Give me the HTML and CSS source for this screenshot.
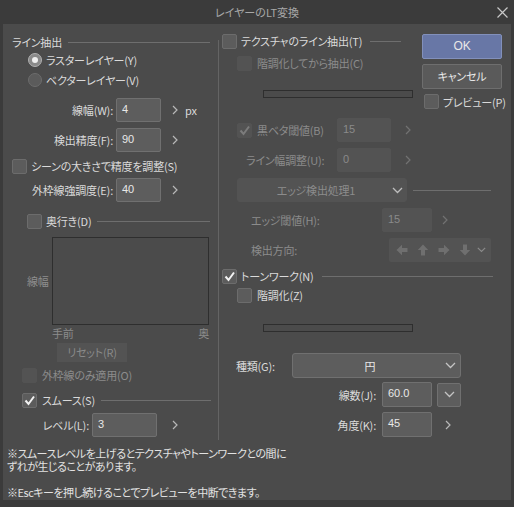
FILE: index.html
```html
<!DOCTYPE html>
<html lang="ja">
<head>
<meta charset="utf-8">
<title>レイヤーのLT変換</title>
<link rel="stylesheet" href="styles.css">
</head>
<body>
<div class="window">
  <div class="titlebar">
    <span class="title">レイヤーのLT変換</span>
    <svg class="close" width="11" height="11" viewBox="0 0 11 11"><path d="M0.5 0.5l10 10M10.5 0.5l-10 10" stroke="#c8c8c8" stroke-width="1.2" fill="none"/></svg>
  </div>
  <div class="panel">
    <div class="cols">
      <div class="left">
        <div class="row h16 mt10 pl5 pr4"><span>ライン抽出</span><span class="hline ml6"></span></div>
        <div class="row h16 mt2 pl21"><span class="radio on"></span><span class="ml4">ラスターレイヤー(Y)</span></div>
        <div class="row h16 mt4 pl21"><span class="radio"></span><span class="ml4">ベクターレイヤー(V)</span></div>
        <div class="row h24 mt10"><span class="lbl-r w106">線幅(W):</span><span class="field w45">4</span><span class="spin ml11"><svg width="6" height="10" viewBox="0 0 6 10"><path d="M1 1l4 4-4 4" fill="none" stroke="#b8b8b8" stroke-width="1.2"/></svg></span><span class="unit">px</span></div>
        <div class="row h24 mt6"><span class="lbl-r w106">検出精度(F):</span><span class="field w45">90</span><span class="spin ml11"><svg width="6" height="10" viewBox="0 0 6 10"><path d="M1 1l4 4-4 4" fill="none" stroke="#b8b8b8" stroke-width="1.2"/></svg></span></div>
        <div class="row h16 mt6 pl5"><span class="cb"></span><span class="ml4">シーンの大きさで精度を調整(S)</span></div>
        <div class="row h24 mt4"><span class="lbl-r w106">外枠線強調度(E):</span><span class="field w45">40</span><span class="spin ml11"><svg width="6" height="10" viewBox="0 0 6 10"><path d="M1 1l4 4-4 4" fill="none" stroke="#b8b8b8" stroke-width="1.2"/></svg></span></div>
        <div class="row h16 mt11 pl20 pr4"><span class="cb"></span><span class="ml4">奥行き(D)</span><span class="hline ml6"></span></div>
        <div class="row graph-row mt8 pl20"><span class="glabel">線幅</span><div class="graph"></div></div>
        <div class="graph-axis mt1"><span>手前</span><span>奥</span></div>
        <div class="row mt3 pl50"><span class="btn-dis">リセット(R)</span></div>
        <div class="row h16 mt5 pl15"><span class="cb dis"></span><span class="ml5 dim">外枠線のみ適用(O)</span></div>
        <div class="row h16 mt9 pl15 pr3"><span class="cb"><svg width="13" height="13" viewBox="0 0 13 13"><path d="M2.5 6.5l3 3.5 5.5-7.5" fill="none" stroke="#f2f2f2" stroke-width="2"/></svg></span><span class="ml5">スムース(S)</span><span class="hline ml6"></span></div>
        <div class="row h24 mt5"><span class="lbl-r w82">レベル(L):</span><span class="field w65">3</span><span class="spin ml15"><svg width="6" height="10" viewBox="0 0 6 10"><path d="M1 1l4 4-4 4" fill="none" stroke="#b8b8b8" stroke-width="1.2"/></svg></span></div>
      </div>
      <div class="vdiv"></div>
      <div class="right">
        <div class="topblock">
          <div class="tex">
            <div class="row h16 mt9"><span class="cb"></span><span class="ml4">テクスチャのライン抽出(T)</span><span class="hline ml8 mr12"></span></div>
            <div class="row h16 mt6 pl15"><span class="cb dis"></span><span class="ml5 dim">階調化してから抽出(C)</span></div>
            <div class="bar mt19"></div>
            <div class="row h24 mt20 pl15"><span class="cblabel"><span class="cb dis"><svg width="13" height="13" viewBox="0 0 13 13"><path d="M2.5 6.5l3 3.5 5.5-7.5" fill="none" stroke="#7c7c7c" stroke-width="2"/></svg></span><span class="ml5 dim">黒ベタ閾値(B)</span></span><span class="field dis w54">15</span><span class="spin ml14"><svg width="6" height="10" viewBox="0 0 6 10"><path d="M1 1l4 4-4 4" fill="none" stroke="#727272" stroke-width="1.2"/></svg></span></div>
            <div class="row h24 mt6"><span class="lbl dim ml24 w91">ライン幅調整(U):</span><span class="field dis w54">0</span><span class="spin ml14"><svg width="6" height="10" viewBox="0 0 6 10"><path d="M1 1l4 4-4 4" fill="none" stroke="#727272" stroke-width="1.2"/></svg></span></div>
          </div>
          <div class="btns">
            <div class="btn ok">OK</div>
            <div class="btn mt5">キャンセル</div>
            <div class="row h15 mt5 pl2"><span class="cb"></span><span class="ml4">プレビュー(P)</span></div>
          </div>
        </div>
        <div class="row h24 mt6"><span class="dd dis ml15 w170"><span class="dd-text">エッジ検出処理1</span><svg width="11" height="7" viewBox="0 0 11 7"><path d="M1 1l4.5 4.5L10 1" fill="none" stroke="#bdbdbd" stroke-width="1.3"/></svg></span><span class="hline ml6 mr20"></span></div>
        <div class="row h24 mt6"><span class="lbl dim ml29 w131">エッジ閾値(H):</span><span class="field dis w50">15</span><span class="spin ml10"><svg width="6" height="10" viewBox="0 0 6 10"><path d="M1 1l4 4-4 4" fill="none" stroke="#727272" stroke-width="1.2"/></svg></span></div>
        <div class="row h24 mt6"><span class="lbl dim ml29 w138">検出方向:</span>
          <span class="dirs">
            <svg width="12" height="12" viewBox="0 0 12 12"><path d="M0.5 6L6 0.8V4h5.5v4H6v3.2z" fill="#6f6f6f"/></svg>
            <svg width="12" height="12" viewBox="0 0 12 12"><path d="M6 0.5L11.2 6H8v5.5H4V6H0.8z" fill="#6f6f6f"/></svg>
            <svg width="12" height="12" viewBox="0 0 12 12"><path d="M11.5 6L6 0.8V4H0.5v4H6v3.2z" fill="#6f6f6f"/></svg>
            <svg width="12" height="12" viewBox="0 0 12 12"><path d="M6 11.5L11.2 6H8V0.5H4V6H0.8z" fill="#6f6f6f"/></svg>
            <svg class="dirchev" width="9" height="6" viewBox="0 0 9 6"><path d="M0.8 0.8l3.7 3.7 3.7-3.7" fill="none" stroke="#8a8a8a" stroke-width="1.2"/></svg>
          </span>
        </div>
        <div class="row h16 mt6"><span class="cb"><svg width="13" height="13" viewBox="0 0 13 13"><path d="M2.5 6.5l3 3.5 5.5-7.5" fill="none" stroke="#f2f2f2" stroke-width="2"/></svg></span><span class="ml4">トーンワーク(N)</span><span class="hline ml8 mr18"></span></div>
        <div class="row h16 mt3 pl15"><span class="cb"></span><span class="ml5">階調化(Z)</span></div>
        <div class="bar mt21"></div>
        <div class="row h25 mt21"><span class="lbl ml14 w56">種類(G):</span><span class="dd w169"><span class="dd-text">円</span><svg width="11" height="7" viewBox="0 0 11 7"><path d="M1 1l4.5 4.5L10 1" fill="none" stroke="#c4c4c4" stroke-width="1.3"/></svg></span></div>
        <div class="row h25 mt4"><span class="lbl-r w160">線数(J):</span><span class="field w50">60.0</span><span class="ddbtn"><svg width="11" height="7" viewBox="0 0 11 7"><path d="M1 1l4.5 4.5L10 1" fill="none" stroke="#c4c4c4" stroke-width="1.3"/></svg></span></div>
        <div class="row h25 mt5"><span class="lbl-r w160">角度(K):</span><span class="field w50">45</span><span class="spin ml13"><svg width="6" height="10" viewBox="0 0 6 10"><path d="M1 1l4 4-4 4" fill="none" stroke="#b8b8b8" stroke-width="1.2"/></svg></span></div>
      </div>
    </div>
    <div class="notes">
      <p class="nl">※スムースレベルを上げるとテクスチャやトーンワークとの間に</p>
      <p class="nl">ずれが生じることがあります。</p>
      <p class="nl note2">※Escキーを押し続けることでプレビューを中断できます。</p>
    </div>
  </div>
</div>
</body>
</html>
```

FILE: styles.css
```css
* { box-sizing: border-box; }
html, body { margin: 0; padding: 0; }
body {
  width: 514px;
  height: 507px;
  overflow: hidden;
  background: #3b3b3b;
  font-family: "Noto Sans CJK JP", "Noto Sans", sans-serif;
  font-size: 11px;
  letter-spacing: -0.2px;
  color: #dadada;
  font-feature-settings: "palt";
}
.window { width: 514px; height: 507px; }
.titlebar {
  height: 24px;
  display: grid;
  grid-template-columns: 1fr auto 1fr;
  align-items: center;
}
.title { grid-column: 2; color: #a8a8a8; letter-spacing: 0; }
.close { grid-column: 3; justify-self: end; margin-right: 6px; }
.panel {
  margin: 0 3px;
  height: 476px;
  background: #4b4b4b;
}
.cols { display: flex; height: 416px; }
.left { width: 207px; margin-left: 4px; display: flex; flex-direction: column; }
.vdiv { width: 1px; height: 400px; margin-left: 4px; margin-top: 16px; background: #646464; }
.right { flex: 1; margin-left: 3px; display: flex; flex-direction: column; }
.topblock { display: flex; }
.tex { width: 191px; display: flex; flex-direction: column; }
.btns { width: 80px; margin-left: 9px; margin-top: 10px; display: flex; flex-direction: column; }

.row { display: flex; align-items: center; white-space: nowrap; }
.h15 { height: 15px; }
.h16 { height: 16px; }
.h24 { height: 24px; }
.h25 { height: 25px; }

.mt1 { margin-top: 1px; } .mt2 { margin-top: 2px; } .mt3 { margin-top: 3px; }
.mt4 { margin-top: 4px; } .mt5 { margin-top: 5px; } .mt6 { margin-top: 6px; }
.mt8 { margin-top: 8px; } .mt9 { margin-top: 9px; } .mt10 { margin-top: 10px; }
.mt11 { margin-top: 11px; } .mt19 { margin-top: 19px; } .mt20 { margin-top: 20px; }
.mt21 { margin-top: 21px; }
.pl2 { padding-left: 2px; } .pl5 { padding-left: 5px; } .pl15 { padding-left: 15px; }
.pl20 { padding-left: 20px; } .pl21 { padding-left: 21px; } .pl50 { padding-left: 50px; }
.pr3 { padding-right: 3px; } .pr4 { padding-right: 4px; }
.ml4 { margin-left: 4px; } .ml5 { margin-left: 5px; } .ml6 { margin-left: 6px; }
.ml8 { margin-left: 8px; } .ml10 { margin-left: 10px; } .ml11 { margin-left: 11px; }
.ml13 { margin-left: 13px; } .ml14 { margin-left: 14px; } .ml15 { margin-left: 15px; }
.ml24 { margin-left: 24px; } .ml29 { margin-left: 29px; }
.mr12 { margin-right: 12px; } .mr18 { margin-right: 18px; } .mr20 { margin-right: 20px; }

.dim { color: #8c8c8c; }
.hline { flex: 1; height: 1px; background: #6e6e6e; }

.lbl { flex: none; }
.lbl-r { flex: none; text-align: right; margin-right: 3px; }
.lbl-r.w160 { margin-right: 6px; }
.w45 { width: 45px; } .w50 { width: 50px; } .w54 { width: 54px; } .w56 { width: 56px; }
.w65 { width: 65px; } .w82 { width: 82px; } .w91 { width: 91px; } .w106 { width: 106px; }
.w131 { width: 131px; } .w138 { width: 138px; } .w160 { width: 154px; } .w169 { width: 169px; }
.w170 { width: 170px; }

.field {
  flex: none;
  height: 24px;
  padding: 2px 0 0 5px;
  background: #5d5d5d;
  border: 1px solid #707070;
  border-radius: 2px;
  color: #e8e8e8;
  font-family: "Liberation Sans", sans-serif;
  font-size: 11px;
  letter-spacing: 0;
  line-height: 16px;
}
.h25 .field { height: 25px; }
.field.dis { background: #535353; border-color: #535353; color: #8a8a8a; }
.spin { display: flex; align-items: center; }
.unit { margin-left: 7px; }

.cb {
  flex: none;
  width: 15px;
  height: 15px;
  background: #5c5c5c;
  border: 1px solid #6c6c6c;
  border-radius: 2px;
  display: flex;
  align-items: center;
  justify-content: center;
}
.cb.dis { background: #535353; border-color: #535353; }
.cblabel { width: 100px; flex: none; display: flex; align-items: center; }

.radio {
  flex: none;
  width: 14px;
  height: 14px;
  border-radius: 50%;
  background: #5b5b5b;
  border: 1px solid #6c6c6c;
  display: flex;
  align-items: center;
  justify-content: center;
}
.radio.on { background: #8a8a8a; border-color: #b0b0b0; }
.radio.on::after { content: ""; width: 6px; height: 6px; border-radius: 50%; background: #f0f0f0; }

.graph-row { height: 88px; }
.glabel { width: 25px; color: #8e8e8e; }
.graph { width: 157px; height: 88px; border: 1px solid #2e2e2e; }
.graph-axis {
  margin-left: 45px;
  width: 157px;
  height: 14px;
  line-height: 14px;
  display: flex;
  justify-content: space-between;
  color: #8c8c8c;
}
.btn-dis {
  width: 70px;
  height: 19px;
  line-height: 19px;
  text-align: center;
  background: #535353;
  color: #8a8a8a;
}

.bar { margin-left: 41px; width: 150px; height: 8px; border: 1px solid #2e2e2e; flex: none; }

.btn {
  height: 25px;
  line-height: 23px;
  text-align: center;
  background: #5a5a5a;
  border: 1px solid #6e6e6e;
  border-radius: 2px;
  color: #e8e8e8;
}
.btn.ok { background: #6877a6; border-color: #8290bb; font-family: "Liberation Sans", sans-serif; font-size: 12px; }

.dd {
  flex: none;
  height: 25px;
  display: flex;
  align-items: center;
  padding-right: 4px;
  background: #5d5d5d;
  border: 1px solid #707070;
  border-radius: 3px;
  color: #e8e8e8;
}
.dd.dis { height: 24px; background: #535353; border-color: #535353; color: #8c8c8c; padding-right: 3px; }
.dd-text { flex: 1; text-align: center; padding-left: 2px; }
.ddbtn {
  flex: none;
  width: 24px;
  height: 24px;
  margin-left: 5px;
  background: #5d5d5d;
  border: 1px solid #707070;
  border-radius: 2px;
  display: flex;
  align-items: center;
  justify-content: center;
}
.dirs {
  flex: none;
  width: 102px;
  height: 24px;
  display: flex;
  align-items: center;
  gap: 9px;
  padding-left: 7px;
  background: #535353;
  border-radius: 2px;
}
.dirchev { margin-left: -3px; }

.notes { margin-top: 7px; padding-left: 4px; color: #e2e2e2; letter-spacing: -0.5px; }
.notes .nl { margin: 0; height: 13px; line-height: 13px; }
.notes .note2 { margin-top: 13px; }
```
